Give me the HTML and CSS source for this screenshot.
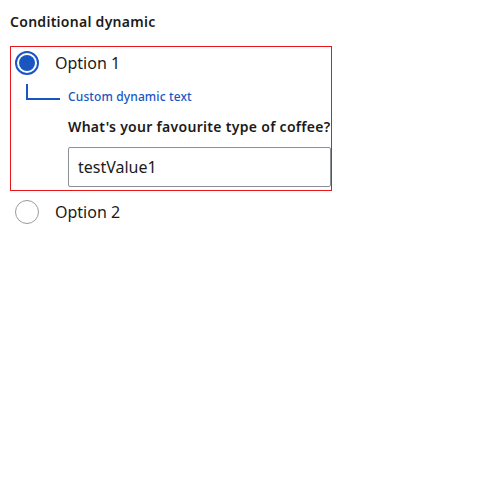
FILE: index.html
```html
<!DOCTYPE html>
<html>
<head>
<meta charset="utf-8">
<link rel="stylesheet" href="styles.css">
</head>
<body>
<div class="page">
  <div class="heading">Conditional dynamic</div>
  <div class="group">
    <div class="option-row">
      <span class="radio checked"><span class="dot"></span></span>
      <span class="label">Option 1</span>
    </div>
    <div class="hint-row">
      <span class="connector"></span>
      <span class="hint">Custom dynamic text</span>
    </div>
    <div class="nested">
      <div class="question">What's your favourite type of coffee?</div>
      <div class="input">testValue1</div>
    </div>
  </div>
  <div class="option-row second">
    <span class="radio"></span>
    <span class="label">Option 2</span>
  </div>
</div>
</body>
</html>
```
FILE: styles.css
```css
html, body { margin: 0; padding: 0; background: #fff; }
body { font-family: "Noto Sans", "Open Sans", sans-serif; color: #1b1b1b; }
.page { padding: 12px 10px; width: 322px; }
.heading { font-size: 14px; font-weight: 600; line-height: 19px; letter-spacing: 0.28px; }
.group {
  margin-top: 15px;
  border: 1px solid #e8171b;
  height: 145px;
  box-sizing: border-box;
  width: 322px;
}
.option-row { display: flex; align-items: center; height: 26px; margin-top: 3px; }
.radio {
  width: 24px; height: 24px; box-sizing: border-box; border-radius: 50%;
  border: 1px solid #9a9a9a; margin-left: 4px; display: flex; align-items: center; justify-content: center;
  flex: none;
}
.radio.checked { border: 2px solid #1a56c2; }
.dot { width: 16px; height: 16px; border-radius: 50%; background: #1a56c2; }
.label { font-size: 16px; margin-left: 16px; line-height: 22px; }
.hint-row { display: flex; align-items: flex-end; height: 21px; margin-top: 3px; }
.connector {
  width: 34px; height: 16px; margin-left: 15px; box-sizing: border-box;
  border-left: 2px solid #1a56c2; border-bottom: 2px solid #1a56c2; flex: none;
}
.hint { color: #1a56c2; font-size: 12px; font-weight: 500; margin-left: 8px; line-height: 16px; margin-bottom: -5px; letter-spacing: 0.12px; }
.nested { margin-left: 57px; }
.question { font-size: 14px; font-weight: 600; margin-top: 17px; line-height: 19px; white-space: nowrap; letter-spacing: 0.3px; }
.input {
  margin-top: 11px; height: 40px; box-sizing: border-box; border: 1px solid #8b8f96; border-radius: 2px;
  font-size: 16px; line-height: 38px; padding-left: 9px; width: 263px;
}
.second { margin-top: 8px; }
.second .radio { margin-left: 5px; }
.second .label { margin-left: 16px; }
```
